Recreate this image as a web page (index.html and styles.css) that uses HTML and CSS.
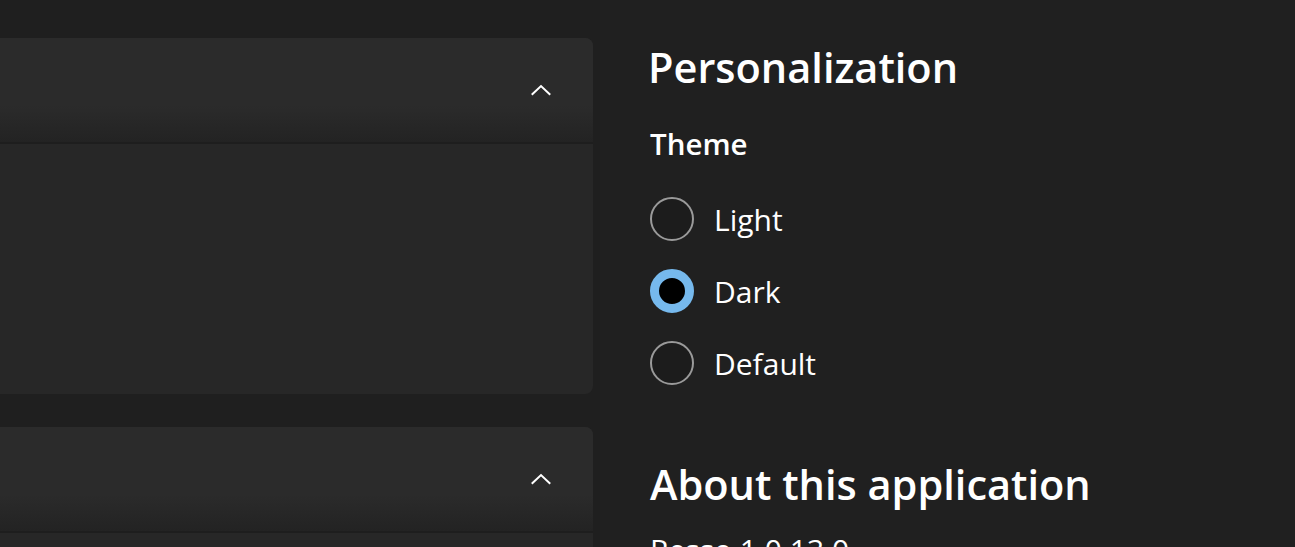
FILE: index.html
```html
<html>
<head>
	<title>Settings</title>
	<link rel="stylesheet" href="styles.css">
</head>
<body>

<div class="page">
	<div class="cards">
		<div class="card">
			<div class="card-head">
				<svg class="chevron" width="20" height="12" viewBox="0 0 20 12">
					<path d="M1.5 10 L10 2 L18.5 10" fill="none" stroke="#fff" stroke-width="2" stroke-linecap="square"/>
				</svg>
			</div>
			<div class="card-body"></div>
		</div>

		<div class="card">
			<div class="card-head">
				<svg class="chevron" width="20" height="12" viewBox="0 0 20 12">
					<path d="M1.5 10 L10 2 L18.5 10" fill="none" stroke="#fff" stroke-width="2" stroke-linecap="square"/>
				</svg>
			</div>
			<div class="card-body"></div>
		</div>
	</div>

	<div class="settings">
		<h1 class="title">Personalization</h1>
		<h2 class="subtitle">Theme</h2>

		<div class="radios">
			<label class="radio"><span class="dot"></span>Light</label>
			<label class="radio checked"><span class="dot"></span>Dark</label>
			<label class="radio"><span class="dot"></span>Default</label>
		</div>

		<h1 class="title about">About this application</h1>
		<p class="version">Resso 1.0.13.0</p>
	</div>
</div>

</body>
</html>
```

FILE: styles.css
```css
body {
	margin: 0;
	background: #202020;
	color: #fff;
	font-family: "Open Sans", "Noto Sans", sans-serif;
	overflow: hidden;
}

.page {
	display: flex;
	height: 547px;
	overflow: hidden;
}

.cards {
	width: 593px;
	flex: none;
	padding-top: 38px;
	padding-right: 7px;
	background: #1f1f1f;
	display: flex;
	flex-direction: column;
	gap: 33px;
}

.card {
	flex: none;
	margin-left: -20px;
	border-radius: 8px;
	overflow: hidden;
	background: #272727;
}

.card-head {
	height: 104px;
	background: linear-gradient(#2b2b2b 0, #2b2b2b 65%, #232323 100%);
	border-bottom: 2px solid #1e1e1e;
	display: flex;
	align-items: center;
	justify-content: flex-end;
	padding-right: 42px;
}

.chevron {
	display: block;
}

.card-body {
	height: 250px;
}

.settings {
	padding-left: 48px;
}

.title {
	margin: 0;
	font-size: 41.5px;
	font-weight: 600;
	line-height: 56px;
	padding-top: 39px;
}

.subtitle {
	margin: 0;
	font-size: 29.5px;
	font-weight: 600;
	line-height: 40px;
	padding-top: 29px;
	padding-left: 2px;
}

.radios {
	padding-top: 19px;
	padding-left: 2px;
}

.radio {
	display: flex;
	align-items: center;
	gap: 20px;
	height: 72px;
	font-size: 30px;
}

.dot {
	width: 40px;
	height: 40px;
	border: 2px solid #9a9a9a;
	border-radius: 50%;
	box-sizing: content-box;
	background: #1c1c1c;
}

.checked .dot {
	width: 26px;
	height: 26px;
	border: 9px solid #76b9ed;
	background: #000;
}

.about {
	padding-top: 57px;
	padding-left: 2px;
}

.version {
	margin: 0;
	font-size: 30px;
	line-height: 40px;
	padding-top: 18px;
	padding-left: 2px;
}
```
